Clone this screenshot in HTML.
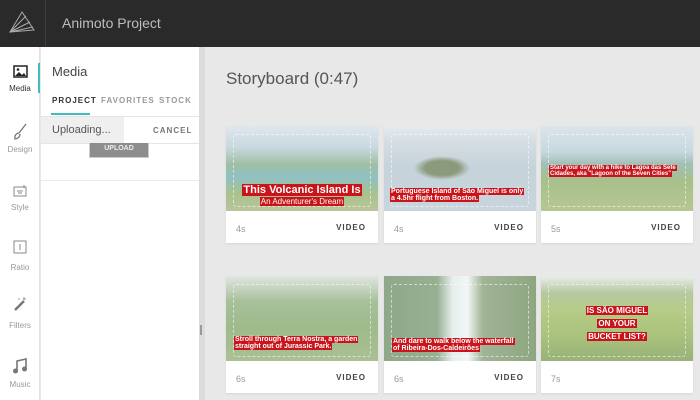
<!DOCTYPE html>
<html><head><style>
*{margin:0;padding:0;box-sizing:border-box}
body{width:700px;height:400px;overflow:hidden;font-family:"Liberation Sans",sans-serif;background:#e8e8e8;position:relative}
.hdr{position:absolute;left:0;top:0;width:700px;height:47px;background:#2a2a2a}
.logo{position:absolute;left:0;top:0;width:46px;height:47px;border-right:1px solid #3d3d3d}
.title{position:absolute;left:62px;top:15px;color:#bdbdbd;font-size:14px}
.rail{position:absolute;left:0;top:47px;width:40px;height:353px;background:#fff;border-right:1px solid #e2e2e2}
.ic{position:absolute;left:0;width:40px;text-align:center}
.lb{position:absolute;left:0;width:40px;text-align:center;font-size:8px;color:#999}
.panel{position:absolute;left:41px;top:47px;width:158px;height:353px;background:#fff}
.sb{position:absolute;left:199px;top:47px;width:6px;height:353px;background:#dcdcdc}
.card{position:absolute;width:152px;height:117px;background:#fff;box-shadow:0 1px 2px rgba(0,0,0,.08)}
.img{position:absolute;left:0;top:0;width:100%;height:85px;overflow:hidden}
.dash{position:absolute;left:7px;top:8px;right:7px;bottom:4px;border:1.5px dashed rgba(255,255,255,.55);border-radius:3px}
.cap{position:absolute;left:0;right:0;text-align:center;color:#fff;font-weight:bold;white-space:nowrap}
.cap span{background:#c8141a;padding:0 1px}
.dur{position:absolute;left:10px;top:98px;font-size:9px;color:#999}
.vid{position:absolute;right:12px;top:97px;font-size:8px;font-weight:bold;letter-spacing:1px;color:#444}
</style></head><body>
<div class="hdr">
<div class="logo"><svg width="46" height="47" viewBox="0 0 46 47"><g fill="none" stroke="#aaa" stroke-width="1"><path d="M10 32 L22 12 L34 30 Z"/><path d="M10 32 L26 16 M10 32 L30 22 M10 32 L33 27"/></g></svg></div>
<div class="title">Animoto Project</div>
</div>
<div class="rail">
<div style="position:absolute;left:38px;top:16px;width:2px;height:30px;background:#3fbcc0"></div>
<div class="ic" style="top:18px"><svg width="15" height="13"><rect x="1" y="1" width="13" height="11" fill="none" stroke="#222" stroke-width="1.5"/><path d="M2 11 L6 7 L9 10 L11 8 L13 11Z" fill="#222"/><circle cx="5" cy="4.5" r="1.3" fill="#222"/></svg></div>
<div class="lb" style="top:37px;color:#333">Media</div>
<div class="ic" style="top:76px"><svg width="16" height="18"><path d="M14 1 L7 10 M7 10 Q2 11 3 16 Q8 15 8 11" stroke="#777" stroke-width="1.3" fill="none"/></svg></div>
<div class="lb" style="top:98px">Design</div>
<div class="ic" style="top:137px"><svg width="14" height="12"><rect x="1" y="2" width="12" height="9" fill="none" stroke="#888"/><path d="M4 6h6M5 8h4M11 0v3" stroke="#888"/></svg></div>
<div class="lb" style="top:156px">Style</div>
<div class="ic" style="top:193px"><svg width="14" height="14"><rect x="1" y="1" width="12" height="12" fill="none" stroke="#888"/><path d="M7 4v6" stroke="#888"/></svg></div>
<div class="lb" style="top:216px">Ratio</div>
<div class="ic" style="top:249px"><svg width="16" height="16"><path d="M3 14 L12 5" stroke="#777" stroke-width="2.5"/><path d="M12 1v3M14 3h-3M6 3h2" stroke="#999"/></svg></div>
<div class="lb" style="top:274px">Filters</div>
<div class="ic" style="top:311px"><svg width="16" height="16"><path d="M5 13V3l9-2v10" stroke="#777" stroke-width="1.6" fill="none"/><circle cx="3.5" cy="13" r="2.5" fill="#777"/><circle cx="12.5" cy="11" r="2.5" fill="#777"/></svg></div>
<div class="lb" style="top:333px">Music</div>
</div>
<div class="panel">
<div style="position:absolute;left:11px;top:17px;font-size:13px;color:#444">Media</div>
<div style="position:absolute;left:11px;top:49px;font-size:8px;font-weight:bold;letter-spacing:1px;color:#333">PROJECT</div>
<div style="position:absolute;left:60px;top:49px;font-size:8px;font-weight:bold;letter-spacing:1px;color:#999">FAVORITES</div>
<div style="position:absolute;left:118px;top:49px;font-size:8px;font-weight:bold;letter-spacing:1px;color:#999">STOCK</div>
<div style="position:absolute;left:10px;top:66px;width:39px;height:2px;background:#3fbcc0"></div>
<div style="position:absolute;left:0;top:69px;width:158px;height:1px;background:#e5e5e5"></div>
<div style="position:absolute;left:0;top:70px;width:83px;height:26px;background:#efefef"></div>
<div style="position:absolute;left:11px;top:77px;font-size:11px;color:#555">Uploading...</div>
<div style="position:absolute;left:112px;top:79px;font-size:8px;font-weight:bold;letter-spacing:1px;color:#777">CANCEL</div>
<div style="position:absolute;left:0;top:96px;width:158px;height:1px;background:#e5e5e5"></div>
<div style="position:absolute;left:48px;top:96px;width:60px;height:15px;background:#8d8d8d;color:#eee;font-size:7px;font-weight:bold;text-align:center;line-height:12px;border:1px solid #ccc;border-top:none">UPLOAD</div>
<div style="position:absolute;left:0;top:133px;width:158px;height:1px;background:#ececec"></div>
</div>
<div class="sb"><div style="position:absolute;left:1px;top:278px;width:2px;height:10px;background:#999"></div></div>
<div style="position:absolute;left:226px;top:69px;font-size:17px;color:#555">Storyboard (0:47)</div>

<div class="card" style="left:226px;top:126px"><div class="img" style="background:linear-gradient(180deg,#dfe7ec 0,#c9d8e0 25%,#9fbfa4 45%,#8fc0c2 60%,#a9c28c 80%,#b9c59a 100%)"><div class="dash"></div>
<div class="cap" style="top:58px;font-size:11px"><span>This Volcanic Island Is</span></div><div class="cap" style="top:71px;font-size:8px;font-weight:normal"><span>An Adventurer's Dream</span></div></div><div class="dur">4s</div><div class="vid">VIDEO</div></div>
<div class="card" style="left:384px;top:126px"><div class="img" style="background:radial-gradient(ellipse 28px 12px at 58px 42px,#8a9a7a 60%,transparent 100%),linear-gradient(180deg,#e6ebee 0,#d4dde2 20%,#c5d3da 50%,#c9d5dc 100%)"><div class="dash"></div>
<div class="cap" style="top:62px;font-size:7px;text-align:left;left:6px"><span>Portuguese Island of São Miguel is only</span><br><span>a 4.5hr flight from Boston.</span></div></div><div class="dur">4s</div><div class="vid">VIDEO</div></div>
<div class="card" style="left:541px;top:126px"><div class="img" style="background:linear-gradient(180deg,#dbe5ea 0,#c8d8e0 30%,#9fc0b6 45%,#a8c08a 65%,#b7c792 100%)"><div class="dash"></div>
<div class="cap" style="top:39px;font-size:6px;text-align:left;left:8px"><span>Start your day with a hike to Lagoa das Sete</span><br><span>Cidades, aka "Lagoon of the Seven Cities"</span></div></div><div class="dur">5s</div><div class="vid">VIDEO</div></div>

<div class="card" style="left:226px;top:276px"><div class="img" style="background:linear-gradient(180deg,#dfe6e0 0,#a7c09a 30%,#9fba8c 60%,#a9c092 100%)"><div class="dash"></div>
<div class="cap" style="top:60px;font-size:7px;text-align:left;left:8px"><span>Stroll through Terra Nostra, a garden</span><br><span>straight out of Jurassic Park.</span></div></div><div class="dur">6s</div><div class="vid">VIDEO</div></div>
<div class="card" style="left:384px;top:276px"><div class="img" style="background:linear-gradient(90deg,#8fa88a 0,#98b092 35%,#e6eeee 45%,#f2f6f6 55%,#a0b496 65%,#8ea680 100%)"><div class="dash"></div>
<div class="cap" style="top:62px;font-size:7px;text-align:left;left:8px"><span>And dare to walk below the waterfall</span><br><span>of Ribeira-Dos-Caldeirões</span></div></div><div class="dur">6s</div><div class="vid">VIDEO</div></div>
<div class="card" style="left:541px;top:276px"><div class="img" style="background:linear-gradient(180deg,#e8eee8 0,#b5c8a0 20%,#b6cc88 40%,#a9c27c 70%,#98b27a 100%)"><div class="dash"></div>
<div class="cap" style="top:28px;font-size:8px;line-height:13px"><span>IS SÃO MIGUEL</span><br><span>ON YOUR</span><br><span>BUCKET LIST?</span></div></div><div class="dur">7s</div></div>
</body></html>
